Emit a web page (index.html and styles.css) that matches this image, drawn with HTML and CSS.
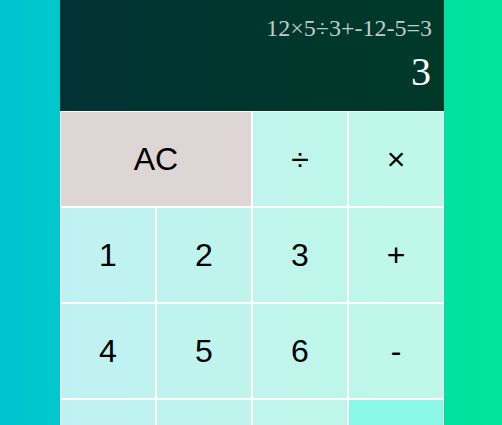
FILE: index.html
```
<!DOCTYPE html>
<html lang="en">
<head>
<meta charset="utf-8">
<title>Calculator</title>
<link rel="stylesheet" href="styles.css">
</head>
<body>
<div class="calculator">
  <div class="output">
    <div class="previous">12×5÷3+-12-5=3</div>
    <div class="current">3</div>
  </div>
  <button class="key span-two clear">AC</button>
  <button class="key">÷</button>
  <button class="key">×</button>
  <button class="key">1</button>
  <button class="key">2</button>
  <button class="key">3</button>
  <button class="key">+</button>
  <button class="key">4</button>
  <button class="key">5</button>
  <button class="key">6</button>
  <button class="key">-</button>
  <button class="key"></button>
  <button class="key"></button>
  <button class="key"></button>
  <button class="key equals"></button>
</div>
</body>
</html>
```

FILE: styles.css
```
html {
  height: 100%;
  overflow: hidden;
  background: linear-gradient(to right, #00c4d1, #00e59a);
}

body {
  margin: 0;
  height: 100%;
  overflow: hidden;
  padding-left: 60px;
}

.calculator {
  display: grid;
  grid-template-columns: repeat(4, 96px);
  grid-template-rows: 111px repeat(4, 96px);
}

.output {
  grid-column: 1 / -1;
  background-color: rgba(0, 0, 0, 0.75);
  display: flex;
  flex-direction: column;
  align-items: flex-end;
  justify-content: flex-start;
  gap: 10px;
  padding: 14px 13px 0 10px;
  font-family: "Liberation Serif", "Times New Roman", serif;
}

.previous {
  color: rgba(255, 255, 255, 0.75);
  font-size: 24px;
  line-height: 28px;
  margin-right: -1px;
}

.current {
  color: #fff;
  font-size: 40px;
  line-height: 40px;
}

.key {
  margin: 0;
  padding: 0;
  border: 1px solid #fff;
  outline: none;
  cursor: pointer;
  font-family: "Liberation Sans", Arial, sans-serif;
  font-size: 32px;
  color: #000;
  background-color: rgba(255, 255, 255, 0.75);
}

.span-two {
  grid-column: span 2;
}

.clear {
  background-color: #ddd6d4;
}

.equals {
  background-color: #8bf7e7;
}
```
